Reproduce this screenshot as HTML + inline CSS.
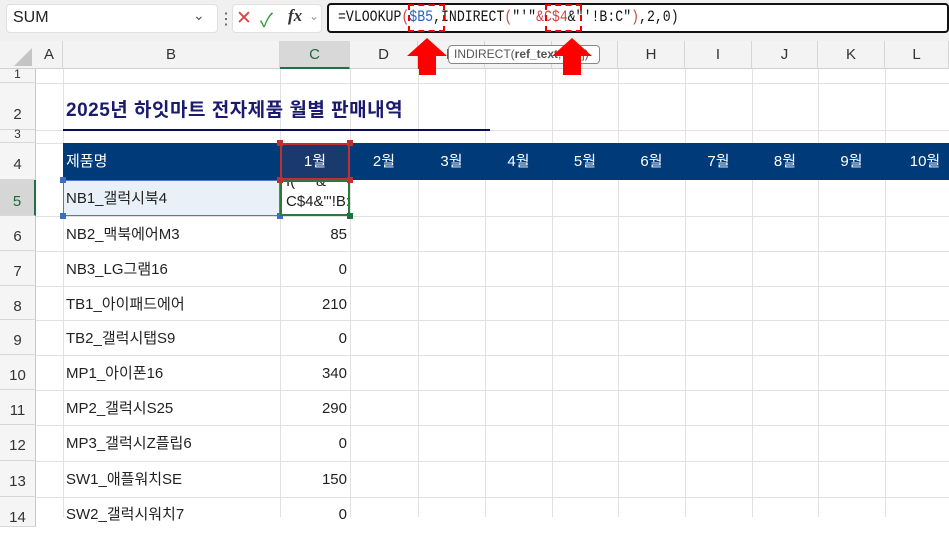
<!DOCTYPE html>
<html><head><meta charset="utf-8"><style>
*{margin:0;padding:0;box-sizing:border-box}
body{width:949px;height:517px;overflow:hidden;background:#fff;font-family:"Liberation Sans","Noto Sans CJK KR",sans-serif;position:relative}
.a{position:absolute}
.vl{position:absolute;top:69px;bottom:0;width:1px;background:#e1e1e1}
.hl{position:absolute;left:36px;right:0;height:1px;background:#e1e1e1}
.rh{position:absolute;left:0;width:36px;text-align:center;font-size:15px;color:#333;background:#f5f5f5;border-right:1px solid #c8c8c8;border-bottom:1px solid #d8d8d8}
.ch{position:absolute;top:41px;height:28px;line-height:28px;text-align:center;font-size:15px;color:#333;border-right:1px solid #d5d5d5}
.b{position:absolute;left:66px;font-size:15px;color:#222;line-height:20px;height:20px;margin-top:2px}
.c{position:absolute;left:280px;width:67px;text-align:right;font-size:15px;color:#222;line-height:20px;height:20px;margin-top:2px}
.m{position:absolute;top:143px;height:37px;line-height:37px;color:#fff;font-size:15px;text-align:center}
.mono{font-family:"Liberation Mono","DejaVu Sans Mono",monospace}
</style></head><body>
<div class="a" style="left:0;top:0;width:949px;height:41px;background:#f0f0f0"></div>
<div class="a" style="left:6px;top:4px;width:212px;height:29px;background:#fff;border-radius:4px;border:1px solid #e0e0e0"></div>
<div class="a" style="left:13px;top:9px;font-size:16px;color:#222">SUM</div>
<div class="a" style="left:193px;top:7px;font-size:14px;color:#555">⌄</div>
<div class="a" style="left:218px;top:9px;font-size:16px;color:#555">⋮</div>
<div class="a" style="left:232px;top:4px;width:90px;height:29px;background:#fff;border-radius:4px;border:1px solid #e0e0e0"></div>
<div class="a" style="left:236px;top:7px;font-size:19px;color:#e04040">✕</div>
<div class="a" style="left:260px;top:6px;font-size:19px;color:#3a9a3a">✓</div>
<div class="a" style="left:288px;top:6px;font-size:17px;font-style:italic;font-family:'Liberation Serif',serif;color:#333"><b>fx</b></div>
<div class="a" style="left:309px;top:9px;font-size:12px;color:#999">⌄</div>
<div class="a" style="left:327px;top:3px;width:622px;height:30px;background:#fff;border:2px solid #111;border-radius:4px"></div>
<div class="a mono" style="left:338px;top:8px;font-size:16px;line-height:18px;color:#111;white-space:pre;transform:scaleX(0.825);transform-origin:0 0">=VLOOKUP<span style="color:#c44">(</span><span style="color:#2a62c0">$B5</span>,INDIRECT<span style="color:#c44">(</span>"'"<span style="color:#c44">&amp;C$4</span>&amp;"'!B:C"<span style="color:#c44">)</span>,2,0)</div>
<div class="a" style="left:408px;top:4px;width:37px;height:28px;border:2px dashed #e00"></div>
<div class="a" style="left:545px;top:4px;width:37px;height:28px;border:2px dashed #e00"></div>
<div class="a" style="left:0;top:41px;width:949px;height:28px;background:#f3f3f3;border-bottom:1px solid #d0d0d0"></div>
<div class="a" style="left:14px;top:48px;width:0;height:0;border-left:18px solid transparent;border-bottom:18px solid #c4c4c4"></div>
<div class="ch" style="left:36px;width:27px">A</div>
<div class="ch" style="left:63px;width:217px">B</div>
<div class="ch" style="left:280px;width:70px;background:#d8d8d8;color:#1e6b3a;border-bottom:2px solid #1e7145">C</div>
<div class="ch" style="left:350px;width:68px">D</div>
<div class="ch" style="left:418px;width:67px">E</div>
<div class="ch" style="left:485px;width:67px">F</div>
<div class="ch" style="left:552px;width:66px">G</div>
<div class="ch" style="left:618px;width:67px">H</div>
<div class="ch" style="left:685px;width:67px">I</div>
<div class="ch" style="left:752px;width:66px">J</div>
<div class="ch" style="left:818px;width:67px">K</div>
<div class="ch" style="left:885px;width:64px">L</div>
<div class="a" style="left:448px;top:45px;width:152px;height:19px;background:#fff;border:1px solid #888;border-radius:4px;font-size:12px;color:#555;padding-left:5px;line-height:17px">INDIRECT(<b>ref_text</b>, [a1])</div>
<svg class="a" style="left:405px;top:36px" width="44" height="40"><path d="M22 2 L42 20 L31 20 L31 39 L13 39 L13 20 L2 20 Z" fill="#f00"/></svg>
<svg class="a" style="left:550px;top:36px" width="44" height="40"><path d="M22 2 L42 20 L31 20 L31 39 L13 39 L13 20 L2 20 Z" fill="#f00"/></svg>
<div class="vl" style="left:63px"></div><div class="vl" style="left:280px"></div><div class="vl" style="left:350px"></div><div class="vl" style="left:418px"></div><div class="vl" style="left:485px"></div><div class="vl" style="left:552px"></div><div class="vl" style="left:618px"></div><div class="vl" style="left:685px"></div><div class="vl" style="left:752px"></div><div class="vl" style="left:818px"></div><div class="vl" style="left:885px"></div>
<div class="hl" style="top:83px"></div><div class="hl" style="top:130px"></div><div class="hl" style="top:143px"></div><div class="hl" style="top:216px"></div><div class="hl" style="top:251px"></div><div class="hl" style="top:286px"></div><div class="hl" style="top:320px"></div><div class="hl" style="top:355px"></div><div class="hl" style="top:390px"></div><div class="hl" style="top:425px"></div><div class="hl" style="top:461px"></div><div class="hl" style="top:497px"></div>
<div class="rh" style="top:69px;height:14px;line-height:10px;font-size:12px">1</div>
<div class="rh" style="top:83px;height:47px;line-height:64px">2</div>
<div class="rh" style="top:130px;height:13px;line-height:8px;font-size:12px">3</div>
<div class="rh" style="top:143px;height:37px;line-height:44px">4</div>
<div class="rh" style="top:180px;height:36px;line-height:44px;background:#d6d6d6;color:#1e6b3a;border-right:2px solid #1e7145">5</div>
<div class="rh" style="top:216px;height:35px;line-height:42px">6</div>
<div class="rh" style="top:251px;height:35px;line-height:42px">7</div>
<div class="rh" style="top:286px;height:34px;line-height:42px">8</div>
<div class="rh" style="top:320px;height:35px;line-height:42px">9</div>
<div class="rh" style="top:355px;height:35px;line-height:42px">10</div>
<div class="rh" style="top:390px;height:35px;line-height:42px">11</div>
<div class="rh" style="top:425px;height:36px;line-height:42px">12</div>
<div class="rh" style="top:461px;height:36px;line-height:42px">13</div>
<div class="rh" style="top:497px;height:30px;line-height:42px">14</div>
<div class="a" style="left:66px;top:95px;font-size:19px;font-weight:bold;color:#1a1a6e;letter-spacing:0.5px">2025년 하잇마트 전자제품 월별 판매내역</div>
<div class="a" style="left:63px;top:129px;width:427px;height:2px;background:#0a0a5e"></div>
<div class="a" style="left:63px;top:143px;width:886px;height:37px;background:#003a78"></div>
<div class="m" style="left:66px;text-align:left">제품명</div>
<div class="m" style="left:281px;width:68px;background:#1a3a6e">1월</div>
<div class="a" style="left:280px;top:143px;width:70px;height:37px;border:2px solid #c03030"></div>
<div class="m" style="left:350px;width:68px">2월</div>
<div class="m" style="left:418px;width:67px">3월</div>
<div class="m" style="left:485px;width:67px">4월</div>
<div class="m" style="left:552px;width:66px">5월</div>
<div class="m" style="left:618px;width:67px">6월</div>
<div class="m" style="left:685px;width:67px">7월</div>
<div class="m" style="left:752px;width:66px">8월</div>
<div class="m" style="left:818px;width:67px">9월</div>
<div class="m" style="left:885px;width:80px">10월</div>
<div class="a" style="left:63px;top:180px;width:217px;height:36px;background:#eaf0f8;border:1px solid #4a7cc8"></div>
<div class="a" style="left:60px;top:177px;width:6px;height:6px;background:#3a6ec0"></div>
<div class="a" style="left:60px;top:213px;width:6px;height:6px;background:#3a6ec0"></div>
<div class="a" style="left:277px;top:213px;width:6px;height:6px;background:#3a6ec0"></div>
<div class="a" style="left:280px;top:180px;width:70px;height:36px;border:2px solid #2a7a3a;overflow:hidden;background:#fff"><div style="position:absolute;left:4px;top:-10px;font-size:15px;color:#222;line-height:20px">I(&nbsp;&nbsp;&nbsp;&nbsp;&nbsp;&amp;<br>C$4&amp;"'!B:</div></div>
<div class="a" style="left:277px;top:140px;width:6px;height:6px;background:#c03030"></div>
<div class="a" style="left:347px;top:140px;width:6px;height:6px;background:#c03030"></div>
<div class="a" style="left:277px;top:177px;width:6px;height:6px;background:#c03030"></div>
<div class="a" style="left:347px;top:177px;width:6px;height:6px;background:#c03030"></div>
<div class="a" style="left:347px;top:213px;width:6px;height:6px;background:#1e7145"></div>
<div class="b" style="top:187px">NB1_갤럭시북4</div>
<div class="b" style="top:223px">NB2_맥북에어M3</div><div class="c" style="top:223px">85</div>
<div class="b" style="top:258px">NB3_LG그램16</div><div class="c" style="top:258px">0</div>
<div class="b" style="top:293px">TB1_아이패드에어</div><div class="c" style="top:293px">210</div>
<div class="b" style="top:327px">TB2_갤럭시탭S9</div><div class="c" style="top:327px">0</div>
<div class="b" style="top:362px">MP1_아이폰16</div><div class="c" style="top:362px">340</div>
<div class="b" style="top:397px">MP2_갤럭시S25</div><div class="c" style="top:397px">290</div>
<div class="b" style="top:432px">MP3_갤럭시Z플립6</div><div class="c" style="top:432px">0</div>
<div class="b" style="top:468px">SW1_애플워치SE</div><div class="c" style="top:468px">150</div>
<div class="b" style="top:503px">SW2_갤럭시워치7</div><div class="c" style="top:503px">0</div>
</body></html>
